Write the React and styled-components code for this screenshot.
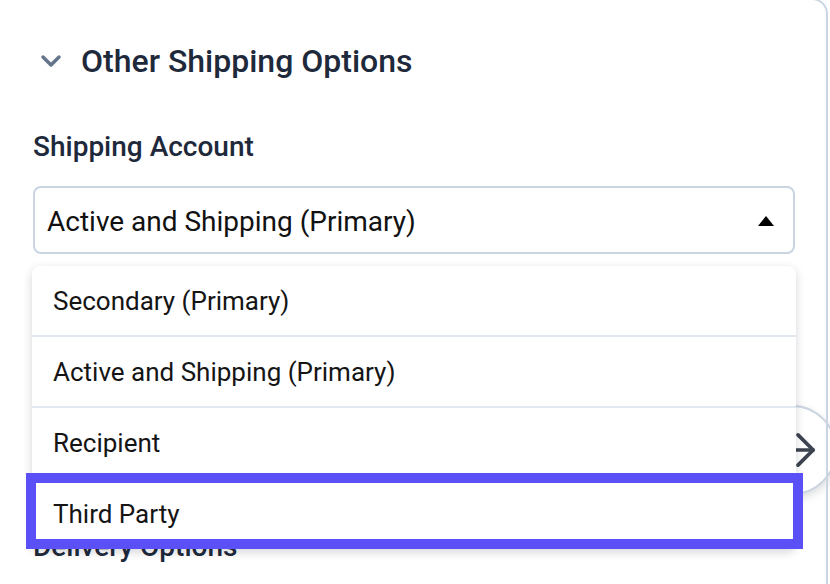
import React from "react";
import styled, { createGlobalStyle } from "styled-components";

const options = [
    "Secondary (Primary)",
    "Active and Shipping (Primary)",
    "Recipient",
    "Third Party",
];

function App() {
    return <>
        <GlobalStyle />
        <Page>
            <NextButton>
                <svg width="52" height="52" viewBox="0 0 24 24" fill="none" stroke="currentColor" strokeWidth="1.7" strokeLinecap="round" strokeLinejoin="round">
                    <path d="M5 12h14" />
                    <path d="m12 5 7 7-7 7" />
                </svg>
            </NextButton>
            <Card>
                <SectionHeader>
                    <svg width="24" height="14" viewBox="0 0 24 14" fill="none" stroke="#64748b" strokeWidth="3.5" strokeLinecap="round" strokeLinejoin="round">
                        <path d="M4 3l8 8 8-8" />
                    </svg>
                    <SectionTitle>Other Shipping Options</SectionTitle>
                </SectionHeader>

                <FieldLabel>Shipping Account</FieldLabel>
                <SelectWrap>
                    <SelectBox>
                        <SelectValue>Active and Shipping (Primary)</SelectValue>
                        <svg width="16" height="10" viewBox="0 0 16 10">
                            <polygon points="8,0 16,10 0,10" fill="#000" />
                        </svg>
                    </SelectBox>
                    <Menu>
                        {options.map((o, i) =>
                            <MenuItem key={o} $last={i === options.length - 1} $focused={o === "Third Party"}>{o}</MenuItem>
                        )}
                    </Menu>
                </SelectWrap>

                <FieldLabel $gap={276}>Delivery Options</FieldLabel>
            </Card>
        </Page>
    </>;
}

const GlobalStyle = createGlobalStyle`
    body {
        margin: 0;
        background: #fff;
        font-family: Roboto, "Liberation Sans", sans-serif;
        overflow: hidden;
    }
`;
const Page = styled.div`
    position: relative;
    width: 830px;
    height: 584px;
    overflow: hidden;
`;
const Card = styled.div`
    position: relative;
    z-index: 2;
    box-sizing: border-box;
    width: 842px;
    min-height: 700px;
    margin: -2px 0 0 -14px;
    padding: 0 31px 0 45px;
    border: 2px solid #cbd5e1;
    border-radius: 16px;
`;
const SectionHeader = styled.div`
    display: flex;
    align-items: center;
    gap: 18px;
    height: 40px;
    margin-top: 41px;
    padding-left: 6px;
`;
const SectionTitle = styled.h2`
    margin: 0;
    font-size: 32px;
    font-weight: 500;
    color: #1e293b;
`;
const FieldLabel = styled.h3`
    margin: ${p => p.$gap || 49}px 0 0;
    font-size: 28px;
    line-height: 34px;
    font-weight: 500;
    color: #1e293b;
`;
const SelectWrap = styled.div`
    position: relative;
    margin-top: 22px;
`;
const SelectBox = styled.div`
    box-sizing: border-box;
    display: flex;
    align-items: center;
    justify-content: space-between;
    height: 68px;
    padding: 2px 19px 0 12px;
    border: 2px solid #cbd5e1;
    border-radius: 8px;
`;
const SelectValue = styled.span`
    font-size: 28px;
    color: #111;
`;
const Menu = styled.div`
    position: absolute;
    top: calc(100% + 12px);
    left: -1px;
    width: 764px;
    background: #fff;
    border-radius: 8px;
    box-shadow: 0 3px 10px rgba(15, 23, 42, 0.18);
`;
const MenuItem = styled.div`
    position: relative;
    display: flex;
    align-items: center;
    height: ${p => p.$focused ? 70 : 69}px;
    padding: 0 21px;
    font-size: 26px;
    color: #151515;
    border-bottom: ${p => p.$last ? "none" : "2px solid #e2e8f0"};

    &::after {
        content: "";
        display: ${p => p.$focused ? "block" : "none"};
        position: absolute;
        inset: -6px -7px 0 -6px;
        border: 10px solid #5b50f6;
    }
`;
const NextButton = styled.div`
    position: absolute;
    z-index: 1;
    left: 747px;
    top: 405px;
    width: 90px;
    height: 90px;
    display: flex;
    align-items: center;
    justify-content: center;
    padding-left: 12px;
    box-sizing: border-box;
    border: 2px solid #cbd5e1;
    border-radius: 50%;
    background: #fff;
    box-shadow: 0 4px 10px rgba(15, 23, 42, 0.15);
    color: #3d4450;
`;

export default App;
